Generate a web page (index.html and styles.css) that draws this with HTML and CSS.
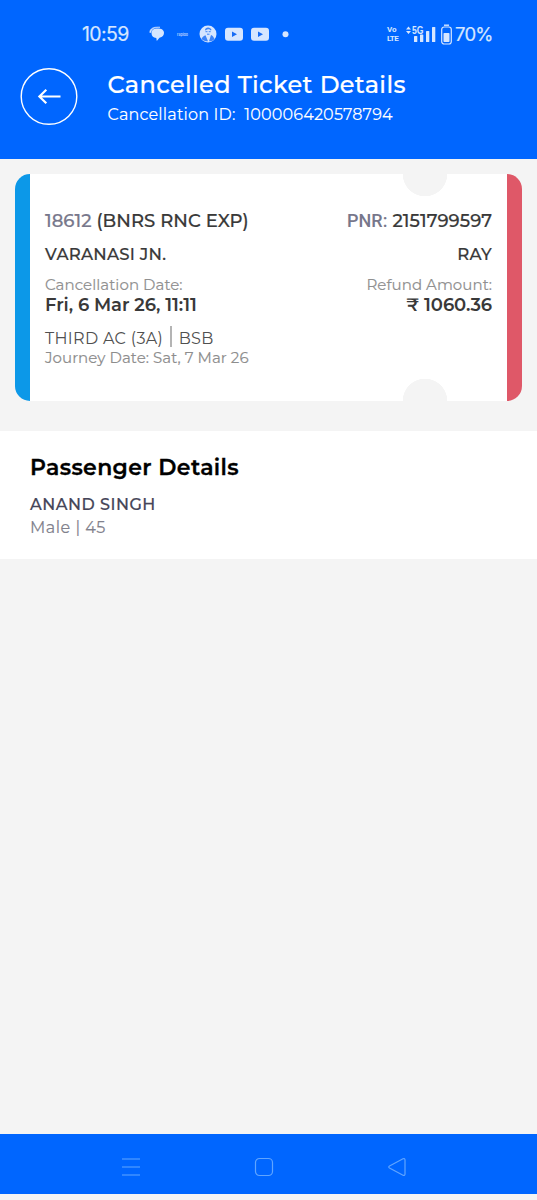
FILE: index.html
```html
<!DOCTYPE html>
<html lang="en">
<head>
<meta charset="utf-8">
<title>Cancelled Ticket Details</title>
<link rel="stylesheet" href="styles.css">
</head>
<body>
<div class="screen">
  <header class="header">
    <div class="status">
      <span class="clock">10:59</span>
      <svg class="notifications" width="150" height="20" viewBox="0 0 150 20">
        <g fill="#d6e6ff">
          <path d="M3.500 9C3.500 5.800 6 4.500 9.500 4.500c4 0 6.500 1.500 6.500 4.300 0 2.500-1.500 4.500-4.500 5L8.800 17l-.5-3C5 13.700 3.500 12 3.500 9z"/>
          <path d="M1.800 8.500C1.800 4.500 5.500 2.500 12 3.300 7 3.300 3.500 4.500 2.800 8.500z" stroke="#d6e6ff" stroke-width=".6"/>
          <circle cx="60" cy="10" r="8.500"/>
          <rect x="77" y="3.700" width="18" height="13" rx="3"/>
          <rect x="103" y="3.700" width="18" height="13" rx="3"/>
          <circle cx="137.500" cy="10.300" r="3"/>
        </g>
        <text x="29" y="11.500" class="rapido" textLength="11" lengthAdjust="spacingAndGlyphs">rapido</text>
        <g fill="#176cf5">
          <path d="M84 7.500l5 2.700-5 2.700zM110 7.500l5 2.700-5 2.700z"/>
          <path d="M57 6c0-3.500 6-3.500 6.500 0l-.8.500c-1-1.700-3.500-1.700-5 0z" opacity=".8"/>
          <path d="M53.500 15c1-2.500 2.500-3 4-3.700l2.500 6c-2.500 0-5-.5-6.500-2.300zM66.500 15c-1-2.500-2-3.300-3.500-4l-2 6.300c2.500 0 4.500-.7 5.500-2.300z" opacity=".8"/>
          <path d="M57.500 7.700h2m1.200 0h2M59 10.200h2.500" stroke="#176cf5" stroke-width=".8"/>
        </g>
      </svg>
      <div class="indicators">
        <span class="volte"><span>Vo</span><span>LTE</span></span>
        <svg class="signal" width="30" height="22" viewBox="0 0 30 22" fill="#d6e6ff">
          <path d="M0 5.500l2.500-3 2.500 3zM0 7l2.500 3L5 7z"/>
          <text x="6" y="9.700" class="five-g" textLength="11.500" lengthAdjust="spacingAndGlyphs">5G</text>
          <rect x="8" y="12" width="3.300" height="6" rx=".6"/>
          <rect x="14" y="10.500" width="3.300" height="7.500" rx=".6"/>
          <rect x="20" y="7" width="3.300" height="11" rx=".6"/>
          <rect x="26" y="3" width="3.300" height="15" rx=".6"/>
        </svg>
        <svg class="battery" width="11" height="22" viewBox="0 0 11 22">
          <path d="M3 1.200h5" stroke="#d6e6ff" stroke-width="1.400"/>
          <rect x=".7" y="3" width="9.600" height="17" rx="2.500" fill="none" stroke="#d6e6ff" stroke-width="1.200"/>
          <rect x="2.500" y="9" width="6" height="9" rx=".8" fill="#d6e6ff"/>
        </svg>
        <span class="percent">70%</span>
      </div>
    </div>
    <div class="titlebar">
      <svg class="back" width="58" height="58" viewBox="0 0 58 58" fill="none" stroke="#fff">
        <circle cx="29" cy="28.500" r="27.800" stroke-width="1.400"/>
        <path d="M40.500 28.500H19.500M26.300 21.800L19.400 28.500l6.900 6.700" stroke-width="2.200"/>
      </svg>
      <div>
        <h1 class="title">Cancelled Ticket Details</h1>
        <p class="cancel-id">Cancellation ID:&nbsp; 100006420578794</p>
      </div>
    </div>
  </header>
  <main>
    <section class="ticket">
      <div class="row row-train"><span class="train"><span class="muted">18612</span> (BNRS RNC EXP)</span><span class="pnr"><span class="muted pnr-label">PNR:</span> <span class="pnr-number">2151799597</span></span></div>
      <div class="row row-station"><span class="from">VARANASI JN.</span><span class="to">RAY</span></div>
      <div class="row row-label"><span class="date-label">Cancellation Date:</span><span class="refund-label">Refund Amount:</span></div>
      <div class="row row-value"><span class="date">Fri, 6 Mar 26, 11:11</span><span class="refund">₹ 1060.36</span></div>
      <div class="row row-class"><span class="coach">THIRD AC (3A)</span><span class="divider"></span><span class="board">BSB</span></div>
      <div class="row row-journey"><span class="journey">Journey Date: Sat, 7 Mar 26</span></div>
    </section>
    <section class="passengers">
      <h2 class="passengers-title">Passenger Details</h2>
      <p class="name">ANAND SINGH</p>
      <p class="info">Male | 45</p>
    </section>
  </main>
  <nav class="navbar">
    <svg width="20" height="20" viewBox="0 0 20 20"><path d="M1 2h18M1 10h18M1 18h18"/></svg>
    <svg width="20" height="20" viewBox="0 0 20 20"><rect x="1.500" y="1.500" width="17" height="17" rx="4"/></svg>
    <svg width="20" height="20" viewBox="0 0 20 20"><path d="M2.500 9L16 1.800q2-.8 2 1.200v14q0 2-2 1.200L2.500 11q-1.500-1 0-2z"/></svg>
  </nav>
</div>
</body>
</html>
```
FILE: styles.css
```css
* { box-sizing: border-box; }
body { margin: 0; background: #f4f4f4; font-family: Montserrat, Inter, "Noto Sans", sans-serif; }
h1, h2, p { margin: 0; }
svg { display: block; flex: none; }
.screen { height: 1200px; padding-bottom: 6px; display: flex; flex-direction: column; overflow: hidden; }
main { flex: 1; }
span { white-space: nowrap; }

.header { height: 159px; background: #0066ff; color: #fff; }
.status { height: 68px; padding: 24px 45px 0 82px; display: flex; align-items: flex-start; color: #d6e6ff; }
.clock { width: 66px; font: 400 19.5px/20px Inter, sans-serif; letter-spacing: -0.6px; -webkit-text-stroke: 0.2px; }
.rapido { font: 700 4px Inter, sans-serif; fill: #a9ccff; }
.indicators { display: flex; margin-left: auto; }
.volte { width: 19px; padding-top: 2px; display: flex; flex-direction: column; font: 700 8px/9px Roboto, sans-serif; letter-spacing: -0.7px; }
.volte span:first-child { height: 8px; line-height: 8px; letter-spacing: 0; }
.volte span + span { height: 9px; letter-spacing: -0.6px; }
.five-g { font: 700 10.5px "Liberation Sans", sans-serif; }
.signal { margin-right: 5px; }
.battery { margin-right: 3px; }
.percent { width: 37px; font: 400 18.5px/20px Inter, sans-serif; letter-spacing: -0.8px; -webkit-text-stroke: 0.2px; }
.titlebar { padding-left: 20px; display: flex; gap: 29.5px; }
.title { font-size: 24px; line-height: 34px; font-weight: 500; letter-spacing: 0.34px; white-space: nowrap; -webkit-text-stroke: 0.2px; }
.cancel-id { padding-top: 3px; font-size: 16px; line-height: 20px; letter-spacing: 0.17px; white-space: nowrap; -webkit-text-stroke: 0.1px; }

.ticket {
  width: 507px; height: 227px; margin: 15px 15px 30px; padding: 37px 15px 0;
  border-left: 15px solid #0c98e8; border-right: 15px solid #df5868; border-radius: 15px;
  background:
    radial-gradient(circle at 395px 0, #f4f4f4 22px, transparent 22.5px),
    radial-gradient(circle at 395px 227px, #f4f4f4 22px, transparent 22.5px),
    #fff;
  color: #393939;
}
.row { display: flex; justify-content: space-between; line-height: 20px; }
.muted { color: #77778b; }
.row-train { font-size: 18px; font-weight: 500; letter-spacing: 0.05px; -webkit-text-stroke: 0.2px; }
.pnr-label { font-family: Roboto, sans-serif; -webkit-text-stroke: 0; }
.row-station { margin-top: 13px; font-size: 16.5px; font-weight: 500; letter-spacing: 0.25px; -webkit-text-stroke: 0.2px; }
.row-label { margin-top: 11px; font-size: 15px; letter-spacing: 0.05px; color: #909090; -webkit-text-stroke: 0.15px; }
.row-value { font-size: 18px; font-weight: 600; letter-spacing: -0.08px; }
.row-class { height: 20px; margin-top: 13px; font-size: 16px; letter-spacing: 0.33px; line-height: 22px; color: #505050; }
.row-class { justify-content: flex-start; }
.row-journey { font-size: 15px; letter-spacing: 0.05px; color: #8d8d8d; -webkit-text-stroke: 0.15px; }
.divider { width: 1.5px; height: 21px; margin: -2px 7px 0; background: #b4b4b4; }

.passengers { height: 128px; padding: 23px 30px 0; background: #fff; }
.passengers-title { font-size: 22px; line-height: 28px; font-weight: 600; letter-spacing: 0.36px; color: #000; -webkit-text-stroke: 0.3px; }
.name { margin-top: 12px; font-size: 16px; line-height: 22px; font-weight: 500; letter-spacing: 0.52px; color: #454558; -webkit-text-stroke: 0.2px; }
.info { margin-top: 2px; font-size: 16px; line-height: 20px; letter-spacing: 0.5px; color: #81818c; -webkit-text-stroke: 0.15px; }
.passengers-title, .name, .info { width: max-content; }

.navbar { height: 60px; padding: 5px 130px 0 121px; background: #0066ff; display: flex; align-items: center; justify-content: space-between; }
.navbar svg { fill: none; stroke: #60a5ff; stroke-width: 1.2; }
```
